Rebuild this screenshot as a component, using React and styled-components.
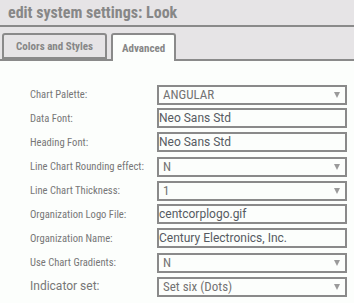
import React from "react";
import styled, { createGlobalStyle } from "styled-components";

const GlobalStyle = createGlobalStyle`
  html, body {
    margin: 0;
    padding: 0;
    background: #fcfefc;
    font-family: Roboto, "Liberation Sans", sans-serif;
  }
`;

const Page = styled.div`
  width: 354px;
  height: 303px;
  overflow: hidden;
  background: #fcfefc;
`;

const Header = styled.header`
  height: 25px;
  display: flex;
  align-items: center;
  padding-left: 8px;
  background: #e6e4e6;
  border-bottom: 2px solid #8a8a8a;
`;

const Title = styled.h1`
  margin: 0;
  font-size: 16px;
  font-weight: 700;
  font-stretch: 75%;
  color: #878787;
`;

const TabBar = styled.nav`
  height: 32px;
  display: flex;
  align-items: flex-end;
  gap: 4px;
  padding-left: 2px;
  background: #e6e4e6;
  border-bottom: 2px solid #8a8a8a;
`;

const Tab = styled.button`
  height: ${(p) => (p.$active ? 28 : 26)}px;
  margin-bottom: ${(p) => (p.$active ? -2 : 0)}px;
  padding: 0 ${(p) => (p.$active ? 9 : 12)}px;
  display: flex;
  align-items: center;
  background: ${(p) => (p.$active ? "#fcfefc" : "#e6e4e6")};
  border: 2px solid #8a8a8a;
  border-bottom: ${(p) => (p.$active ? "none" : "2px solid #8a8a8a")};
  border-radius: 3px 3px 0 0;
  font-family: Roboto, sans-serif;
  font-size: 11px;
  font-weight: 700;
  font-stretch: 75%;
  color: #878787;
  cursor: pointer;
`;

const Form = styled.form`
  display: grid;
  grid-template-columns: 127px 190px;
  grid-auto-rows: 20px;
  row-gap: 4px;
  padding: 23px 0 0 30px;
`;

const Label = styled.label`
  display: flex;
  align-items: center;
  font-size: ${(p) => (p.$big ? 12 : 10.6)}px;
  font-stretch: ${(p) => (p.$big ? "100%" : "75%")};
  color: #777;
`;

const TextInput = styled.input`
  box-sizing: border-box;
  width: 100%;
  height: 20px;
  margin: 0;
  padding: 0;
  border: 2px solid #8a8a8a;
  background: #fcfefc;
  font-family: Roboto, sans-serif;
  font-size: 12px;
  color: #565b62;
  outline: none;
`;

const SelectWrap = styled.div`
  position: relative;
  height: 20px;
`;

const Select = styled.select`
  appearance: none;
  box-sizing: border-box;
  width: 100%;
  height: 20px;
  margin: 0;
  padding: 0 0 0 4px;
  border: 2px solid #8a8a8a;
  border-radius: 0;
  background: #fcfefc;
  font-family: Roboto, sans-serif;
  font-size: 13px;
  font-stretch: 75%;
  color: #737373;
  outline: none;
`;

const Arrow = styled.span`
  position: absolute;
  right: 7px;
  top: 8px;
  width: 0;
  height: 0;
  border-left: 3.5px solid transparent;
  border-right: 3.5px solid transparent;
  border-top: 6px solid #9a9a9a;
  pointer-events: none;
`;

const fields = [
  { label: "Chart Palette:", type: "select", value: "ANGULAR" },
  { label: "Data Font:", type: "text", value: "Neo Sans Std" },
  { label: "Heading Font:", type: "text", value: "Neo Sans Std" },
  { label: "Line Chart Rounding effect:", type: "select", value: "N" },
  { label: "Line Chart Thickness:", type: "select", value: "1" },
  { label: "Organization Logo File:", type: "text", value: "centcorplogo.gif" },
  { label: "Organization Name:", type: "text", value: "Century Electronics, Inc." },
  { label: "Use Chart Gradients:", type: "select", value: "N" },
  { label: "Indicator set:", type: "select", value: "Set six (Dots)", big: true },
];

function Field({ field, id }) {
  if (field.type === "select") {
    return (
      <SelectWrap>
        <Select id={id} defaultValue={field.value}>
          <option>{field.value}</option>
        </Select>
        <Arrow />
      </SelectWrap>
    );
  }
  return <TextInput id={id} type="text" defaultValue={field.value} />;
}

export default function App() {
  return (
    <Page>
      <GlobalStyle />
      <Header>
        <Title>edit system settings: Look</Title>
      </Header>
      <TabBar>
        <Tab type="button">Colors and Styles</Tab>
        <Tab type="button" $active>
          Advanced
        </Tab>
      </TabBar>
      <Form onSubmit={(e) => e.preventDefault()}>
        {fields.map((f, i) => (
          <React.Fragment key={f.label}>
            <Label htmlFor={`f${i}`} $big={f.big}>
              {f.label}
            </Label>
            <Field field={f} id={`f${i}`} />
          </React.Fragment>
        ))}
      </Form>
    </Page>
  );
}
